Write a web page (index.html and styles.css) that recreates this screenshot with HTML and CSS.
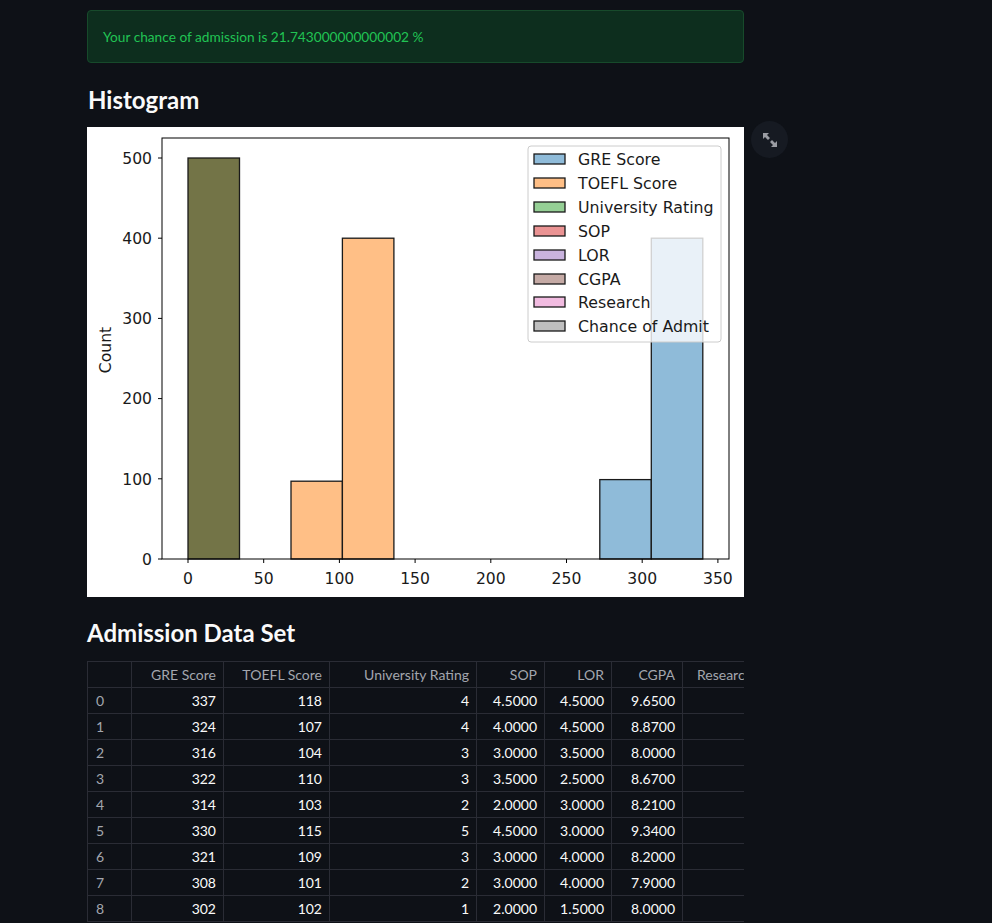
FILE: index.html
```html
<!DOCTYPE html>
<html>
<head>
<meta charset="utf-8">
<link rel="stylesheet" href="styles.css">
</head>
<body>
<main class="main">
  <div class="alert">Your chance of admission is 21.743000000000002 %</div>
  <h2 class="heading heading-hist">Histogram</h2>
  <div class="chart-wrap">
    <svg class="chart" width="657" height="470" viewBox="0 0 657 470" xmlns="http://www.w3.org/2000/svg">
      <rect x="0" y="0" width="657" height="470" fill="#ffffff"/>
      <g stroke="#1a1a1a" stroke-width="1.3">
        <rect x="101" y="31" width="51.5" height="401" fill="#737447"/>
        <rect x="204" y="354.2" width="51.4" height="77.8" fill="#ffbf86"/>
        <rect x="255.4" y="111.2" width="51.5" height="320.8" fill="#ffbf86"/>
        <rect x="512.8" y="352.6" width="51.5" height="79.4" fill="#8fbbd9"/>
        <rect x="564.3" y="111.2" width="51.5" height="320.8" fill="#8fbbd9"/>
      </g>
      <rect x="75" y="11" width="567" height="421" fill="none" stroke="#000" stroke-width="1"/>
      <g stroke="#000" stroke-width="1">
        <line x1="71" y1="432" x2="75" y2="432"/>
        <line x1="71" y1="351.8" x2="75" y2="351.8"/>
        <line x1="71" y1="271.6" x2="75" y2="271.6"/>
        <line x1="71" y1="191.4" x2="75" y2="191.4"/>
        <line x1="71" y1="111.2" x2="75" y2="111.2"/>
        <line x1="71" y1="31" x2="75" y2="31"/>
        <line x1="101" y1="432" x2="101" y2="436"/>
        <line x1="176.7" y1="432" x2="176.7" y2="436"/>
        <line x1="252.4" y1="432" x2="252.4" y2="436"/>
        <line x1="328.1" y1="432" x2="328.1" y2="436"/>
        <line x1="403.8" y1="432" x2="403.8" y2="436"/>
        <line x1="479.5" y1="432" x2="479.5" y2="436"/>
        <line x1="555.2" y1="432" x2="555.2" y2="436"/>
        <line x1="630.9" y1="432" x2="630.9" y2="436"/>
      </g>
      <g class="tick" text-anchor="end">
        <text x="65" y="437.5">0</text>
        <text x="65" y="357.5">100</text>
        <text x="65" y="277">200</text>
        <text x="65" y="197">300</text>
        <text x="65" y="117">400</text>
        <text x="65" y="36.5">500</text>
      </g>
      <g class="tick" text-anchor="middle">
        <text x="101" y="457">0</text>
        <text x="176.7" y="457">50</text>
        <text x="252.4" y="457">100</text>
        <text x="328.1" y="457">150</text>
        <text x="403.8" y="457">200</text>
        <text x="479.5" y="457">250</text>
        <text x="555.2" y="457">300</text>
        <text x="630.9" y="457">350</text>
      </g>
      <text class="tick" x="24" y="223" text-anchor="middle" transform="rotate(-90 24 223)">Count</text>
      <rect x="441" y="19" width="193" height="196" rx="3" ry="3" fill="#ffffff" fill-opacity="0.8" stroke="#cccccc" stroke-width="1"/>
      <g stroke="#1a1a1a" stroke-width="1.3">
        <rect x="447" y="27" width="31" height="10" fill="#8fbbd9"/>
        <rect x="447" y="51" width="31" height="10" fill="#ffbf86"/>
        <rect x="447" y="75" width="31" height="10" fill="#95cf95"/>
        <rect x="447" y="99" width="31" height="10" fill="#ea9393"/>
        <rect x="447" y="123" width="31" height="10" fill="#c9b3de"/>
        <rect x="447" y="147" width="31" height="10" fill="#c5aaa5"/>
        <rect x="447" y="170" width="31" height="10" fill="#f1bbe0"/>
        <rect x="447" y="194" width="31" height="10" fill="#bfbfbf"/>
      </g>
      <g class="leg">
        <text x="491" y="37.5">GRE Score</text>
        <text x="491" y="61.5">TOEFL Score</text>
        <text x="491" y="85.5">University Rating</text>
        <text x="491" y="109.5">SOP</text>
        <text x="491" y="133.5">LOR</text>
        <text x="491" y="157.5">CGPA</text>
        <text x="491" y="180.5">Research</text>
        <text x="491" y="204.5">Chance of Admit</text>
      </g>
    </svg>
    <button class="expand" type="button" aria-label="View fullscreen">
      <svg width="16" height="16" viewBox="0 0 16 16" xmlns="http://www.w3.org/2000/svg">
        <polygon points="1,1 7,1 5,3 8,6 6,8 3,5 1,7" fill="#9a9ca3"/>
        <polygon points="15,15 9,15 11,13 8,10 10,8 13,11 15,9" fill="#9a9ca3"/>
      </svg>
    </button>
  </div>
  <h2 class="heading heading-data">Admission Data Set</h2>
  <div class="table-wrap">
    <table class="data">
      <colgroup>
        <col class="c-idx"><col class="c-gre"><col class="c-toefl"><col class="c-uni"><col class="c-sop"><col class="c-lor"><col class="c-cgpa"><col class="c-res">
      </colgroup>
      <thead>
        <tr><th></th><th>GRE Score</th><th>TOEFL Score</th><th>University Rating</th><th>SOP</th><th>LOR</th><th>CGPA</th><th class="res">Research</th></tr>
      </thead>
      <tbody>
        <tr><td class="idx">0</td><td>337</td><td>118</td><td>4</td><td>4.5000</td><td>4.5000</td><td>9.6500</td><td></td></tr>
        <tr><td class="idx">1</td><td>324</td><td>107</td><td>4</td><td>4.0000</td><td>4.5000</td><td>8.8700</td><td></td></tr>
        <tr><td class="idx">2</td><td>316</td><td>104</td><td>3</td><td>3.0000</td><td>3.5000</td><td>8.0000</td><td></td></tr>
        <tr><td class="idx">3</td><td>322</td><td>110</td><td>3</td><td>3.5000</td><td>2.5000</td><td>8.6700</td><td></td></tr>
        <tr><td class="idx">4</td><td>314</td><td>103</td><td>2</td><td>2.0000</td><td>3.0000</td><td>8.2100</td><td></td></tr>
        <tr><td class="idx">5</td><td>330</td><td>115</td><td>5</td><td>4.5000</td><td>3.0000</td><td>9.3400</td><td></td></tr>
        <tr><td class="idx">6</td><td>321</td><td>109</td><td>3</td><td>3.0000</td><td>4.0000</td><td>8.2000</td><td></td></tr>
        <tr><td class="idx">7</td><td>308</td><td>101</td><td>2</td><td>3.0000</td><td>4.0000</td><td>7.9000</td><td></td></tr>
        <tr><td class="idx">8</td><td>302</td><td>102</td><td>1</td><td>2.0000</td><td>1.5000</td><td>8.0000</td><td></td></tr>
      </tbody>
    </table>
  </div>
</main>
</body>
</html>
```
FILE: styles.css
```css
html, body {
  margin: 0;
  padding: 0;
  background: #0e1117;
  height: 923px;
  overflow: hidden;
}
body {
  font-family: "Lato", "Open Sans", sans-serif;
  color: #fafafa;
}
.main {
  width: 657px;
  margin-left: 87px;
  padding-top: 10px;
}
.alert {
  box-sizing: border-box;
  height: 53px;
  background: #0d2e1e;
  border: 1px solid #174a2b;
  border-radius: 4px;
  color: #21c354;
  font-size: 13.7px;
  line-height: 51px;
  padding: 0 15px;
}
.heading {
  margin: 0;
  font-size: 24px;
  font-weight: 700;
  color: #fafafa;
  line-height: 30px;
}
.heading-hist {
  padding: 22px 0 0 1px;
  height: 42px;
}
.heading-data {
  padding: 21px 0 0 0;
  height: 43px;
}
.chart-wrap {
  position: relative;
  width: 657px;
  height: 470px;
}
.chart {
  display: block;
}
.chart text {
  font-family: "DejaVu Sans", sans-serif;
  fill: #1a1a1a;
}
.tick {
  font-size: 15.6px;
}
.leg {
  font-size: 15.8px;
}
.expand {
  position: absolute;
  left: 664px;
  top: -6px;
  width: 37px;
  height: 37px;
  border-radius: 50%;
  border: none;
  background: #161a22;
  padding: 0;
  display: flex;
  align-items: center;
  justify-content: center;
}
.table-wrap {
  width: 657px;
  overflow: hidden;
}
.data {
  border-collapse: collapse;
  table-layout: fixed;
  width: 747px;
  font-size: 14px;
  font-family: "Lato", "Open Sans", sans-serif;
}
.c-idx { width: 44px; }
.c-gre { width: 92px; }
.c-toefl { width: 106px; }
.c-uni { width: 147px; }
.c-sop { width: 68px; }
.c-lor { width: 67px; }
.c-cgpa { width: 71px; }
.c-res { width: 152px; }
.data th, .data td {
  border: 1px solid #2a2c35;
  height: 26px;
  padding: 0 7px 0 8px;
  text-align: right;
  white-space: nowrap;
  overflow: hidden;
  box-sizing: border-box;
}
.data th {
  font-weight: 400;
  color: #a3a6ae;
}
.data th.res {
  text-align: left;
  padding-left: 14px;
}
.data td {
  color: #fafafa;
}
.data td.idx {
  text-align: left;
  color: #a3a6ae;
  padding-left: 8px;
}
```
